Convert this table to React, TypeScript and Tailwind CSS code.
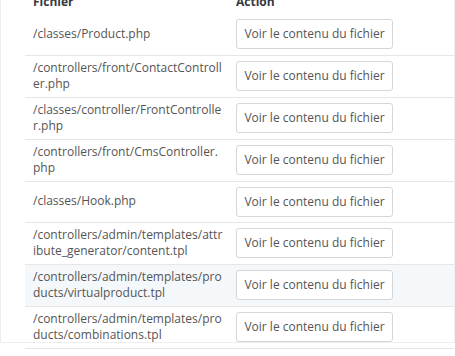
const files: string[] = [
	'/classes/Product.php',
	'/controllers/front/ContactController.php',
	'/classes/controller/FrontController.php',
	'/controllers/front/CmsController.php',
	'/classes/Hook.php',
	'/controllers/admin/templates/attribute_generator/content.tpl',
	'/controllers/admin/templates/products/virtualproduct.tpl',
	'/controllers/admin/templates/products/combinations.tpl',
];

const FileRow = ({ path, hovered }: { path: string; hovered: boolean }) => {
	return (
		<tr className={`h-[41px] border-b border-[#e6e6e6] ${hovered ? 'bg-[#f4f8fb]' : ''}`}>
			<td className="pl-2 pr-1 py-1 align-middle break-all leading-[16.5px]">
				{path}
			</td>
			<td className="pl-2 py-1 align-middle">
				<button className="h-[30px] w-[157px] rounded-[3px] border border-[#d6d6d6] bg-white text-center text-[#555]">
					Voir le contenu du fichier
				</button>
			</td>
		</tr>
	);
};

export default function App() {
	return (
		<div className="h-[356px] w-[455px] overflow-hidden bg-white font-['Open_Sans',sans-serif] text-[12px] text-[#555]">
			<div className="h-[356px] border-x border-b border-[#eeeeee] pl-[24px]">
				<table className="-mt-[13px] w-full table-fixed border-collapse">
					<colgroup>
						<col className="w-[203px]" />
						<col />
					</colgroup>
					<thead>
						<tr>
							<th className="h-[27px] pl-2 pb-[3px] text-left align-bottom font-bold text-[#363a41]">
								Fichier
							</th>
							<th className="pl-2 pb-[3px] text-left align-bottom font-bold text-[#363a41]">
								Action
							</th>
						</tr>
					</thead>
					<tbody>
						{files.map((f, i) => (
							<FileRow key={f} path={f} hovered={i === 6} />
						))}
					</tbody>
				</table>
			</div>
		</div>
	);
}
